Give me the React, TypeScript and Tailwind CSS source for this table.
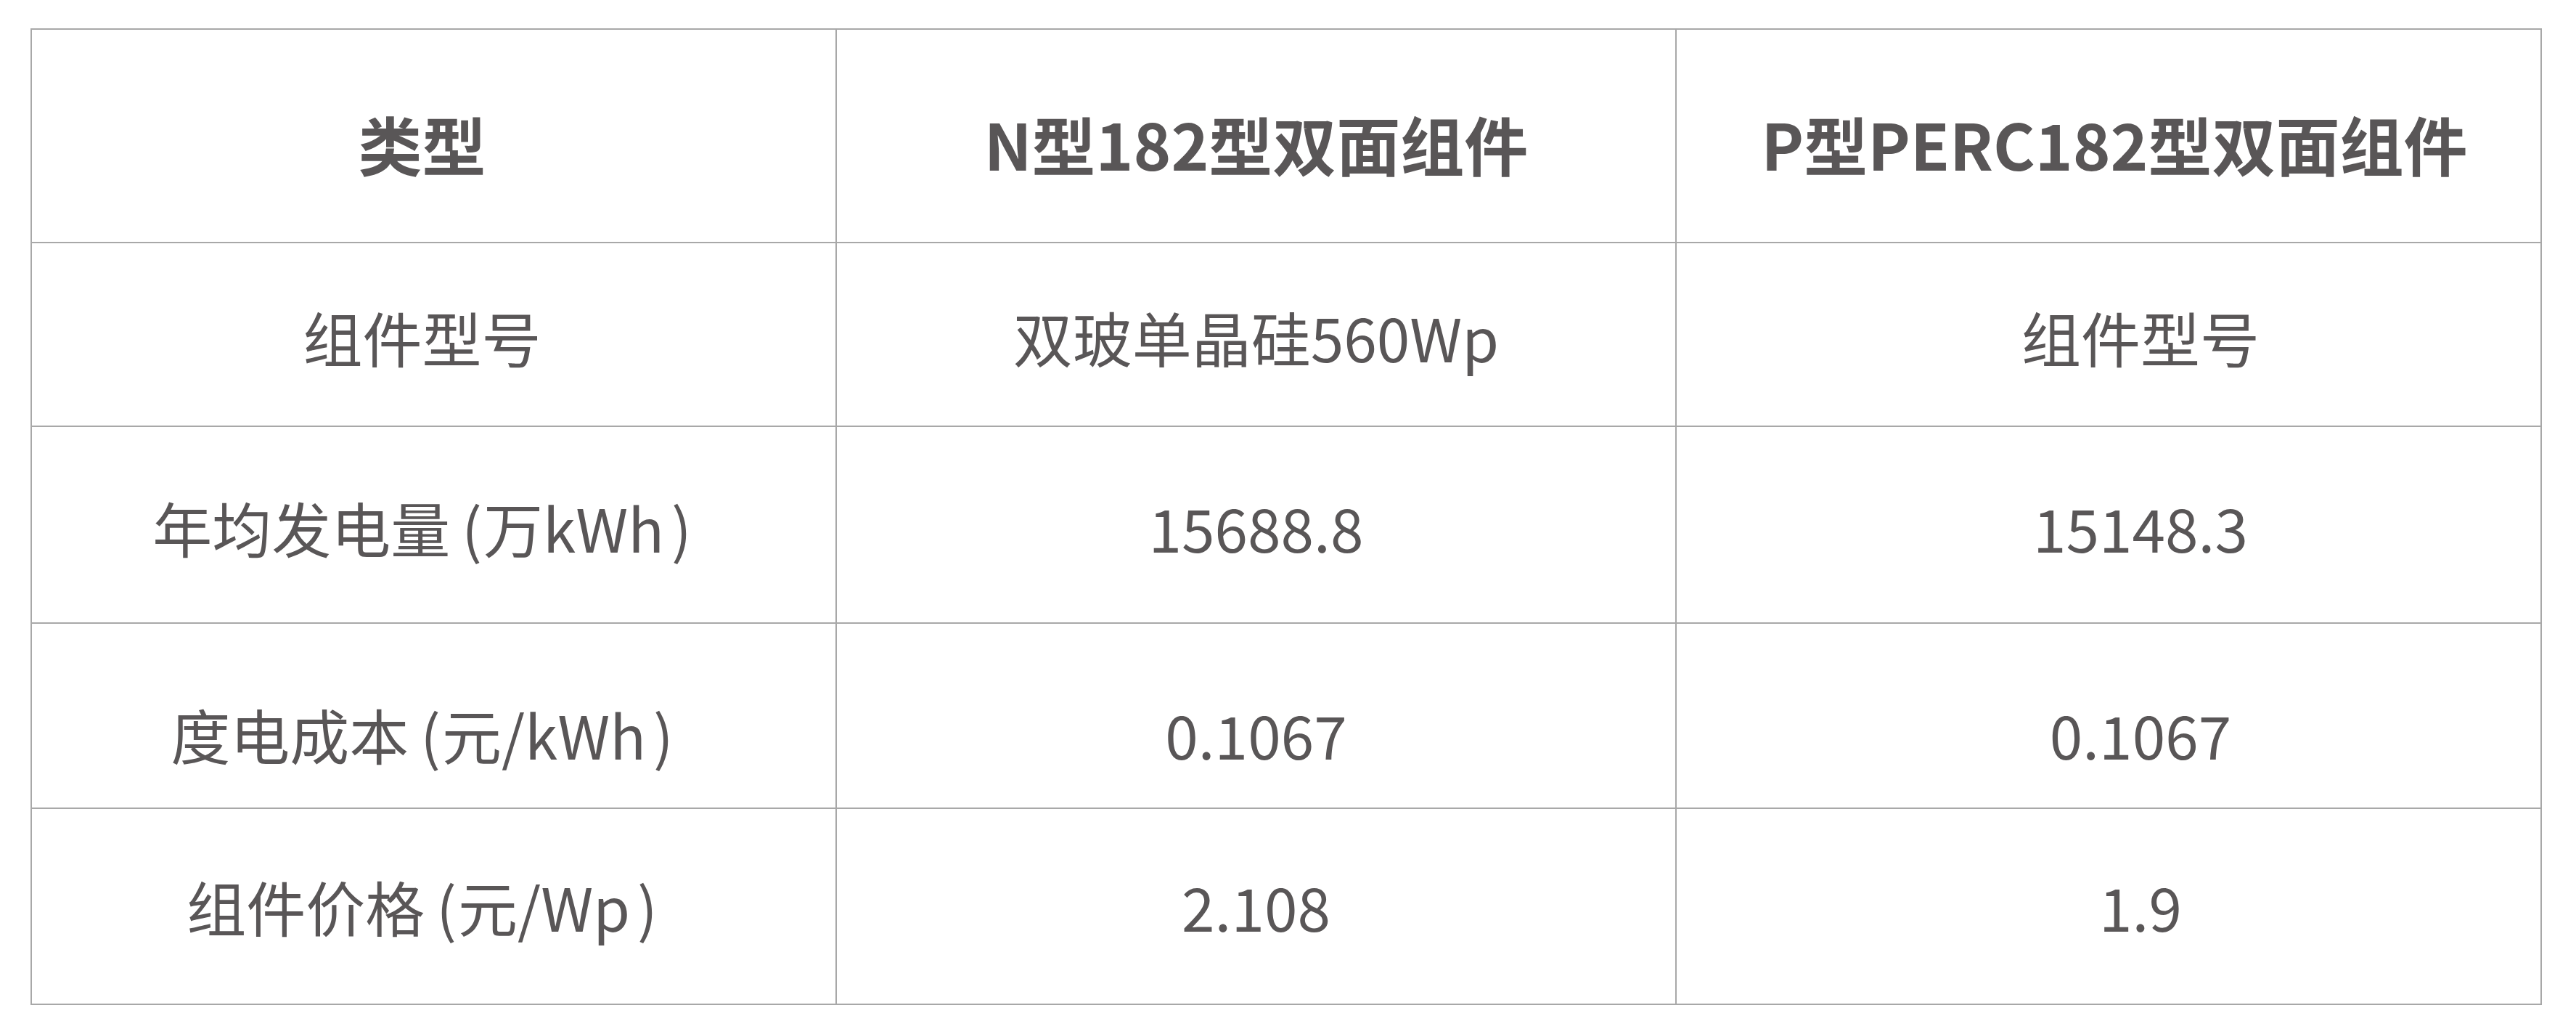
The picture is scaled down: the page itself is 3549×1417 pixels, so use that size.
const rows = [
  {
    cells: ['组件型号', '双玻单晶硅560Wp', '组件型号'],
    cls: 'h-[253px] pt-[7px]',
  },
  {
    cells: ['年均发电量(万kWh)', '15688.8', '15148.3'],
    cls: 'h-[271px] pt-[6px]',
  },
  {
    cells: ['度电成本(元/kWh)', '0.1067', '0.1067'],
    cls: 'h-[255px] pt-[50px]',
  },
  {
    cells: ['组件价格(元/Wp)', '2.108', '1.9'],
    cls: 'h-[270px] pt-0',
  },
];

// column widths include each cell's right border
const colCls = ['w-[1109px] pr-[32px]', 'w-[1157px]', 'w-[1192px] pl-[88px]'];

// parens in the source sit a little looser than the font's own spacing
const Label = ({ text }: { text: string }) => {
  const m = text.match(/^(.*)\((.*)\)$/);
  if (!m) return <>{text}</>;
  return (
    <>
      {m[1]}
      <span className="ml-[16px] mr-[2px]">(</span>
      {m[2]}
      <span className="ml-[10px]">)</span>
    </>
  );
};

const App = () => {
  return (
    <div
      className="min-h-screen bg-white pl-[42px] pt-[39px] text-[#595657]"
      style={{ fontFamily: '"Noto Sans CJK SC", "Noto Sans", sans-serif' }}
    >
      <div className="inline-flex flex-col border-l-2 border-t-2 border-[#a8a8a8]">
        {/* Header */}
        <div className="flex">
          {['类型', 'N型182型双面组件', 'P型PERC182型双面组件'].map((t, i) => (
            <div
              key={t}
              className={`flex h-[294px] items-center justify-center border-b-2 border-r-2 border-[#a8a8a8] pt-[20px] text-[88px] font-bold leading-none ${
                i === 0 ? 'w-[1109px] pr-[32px]' : i === 1 ? 'w-[1157px]' : 'w-[1192px] pl-[16px]'
              }`}
            >
              {t}
            </div>
          ))}
        </div>

        {/* Body */}
        {rows.map((row, r) => (
          <div key={r} className="flex">
            {row.cells.map((t, i) => (
              <div
                key={i}
                className={`flex items-center justify-center border-b-2 border-r-2 border-[#a8a8a8] text-[82px] leading-none ${row.cls} ${colCls[i]}`}
              >
                <span>
                  <Label text={t} />
                </span>
              </div>
            ))}
          </div>
        ))}
      </div>
    </div>
  );
};

export default App;
